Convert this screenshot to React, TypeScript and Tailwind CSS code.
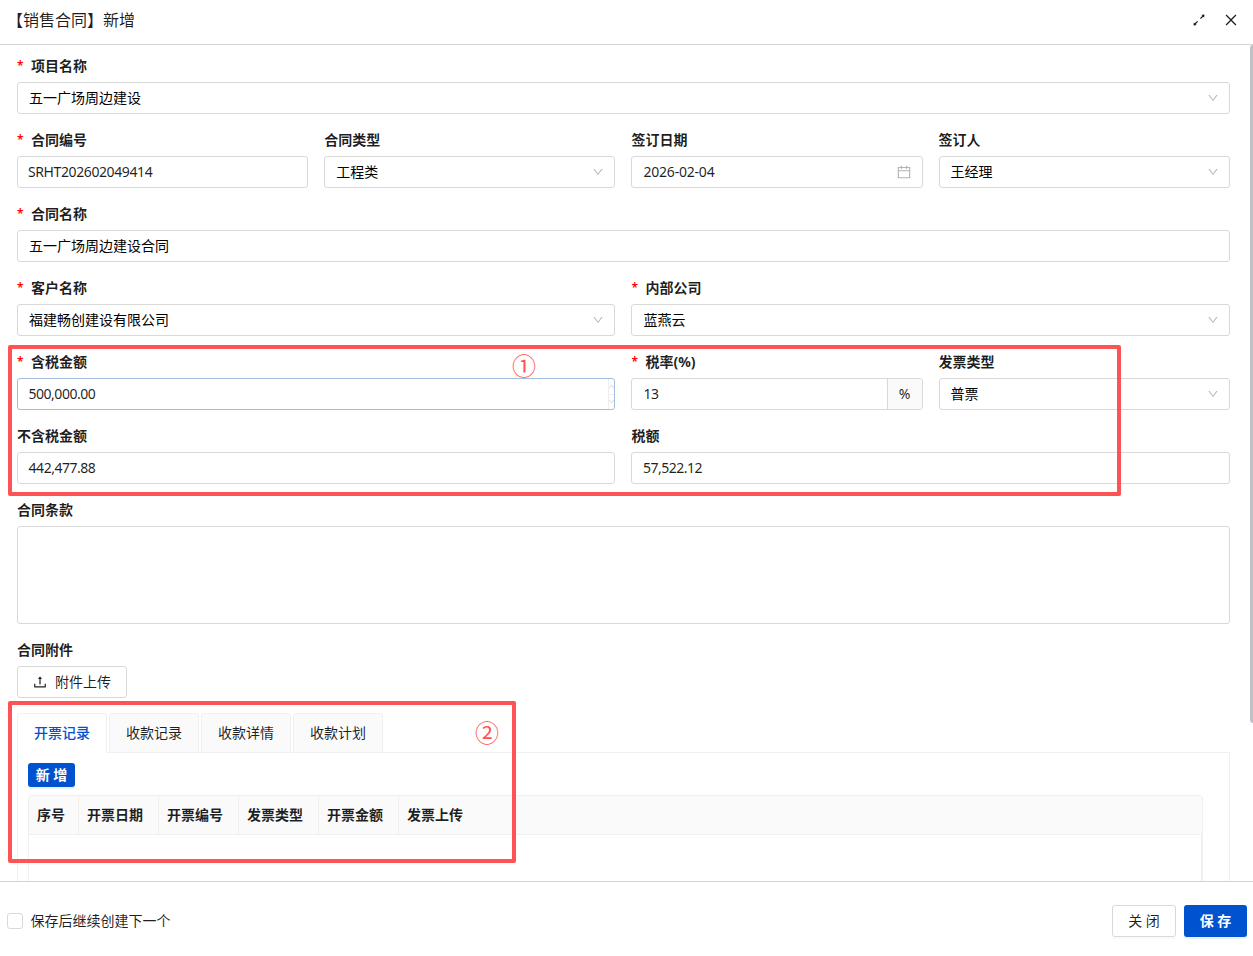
import type { ReactNode } from "react";
import {
  AiOutlineCalendar,
  AiOutlineClose,
  AiOutlineDown,
  AiOutlineUp,
  AiOutlineUpload,
} from "react-icons/ai";

function Label({ text, required }: { text: string; required?: boolean }) {
  return (
    <div className="flex h-8 items-center text-sm font-bold text-black/88">
      {required && <span className="w-[14px] font-['Noto_Sans'] text-[12px] font-semibold leading-none text-[#ff0000]">*</span>}
      <span className="leading-8">{text}</span>
    </div>
  );
}

function Field({ label, required, children, className = "" }: { label: string; required?: boolean; children: ReactNode; className?: string }) {
  return (
    <div className={className}>
      <Label text={label} required={required} />
      {children}
    </div>
  );
}

function Box({ value, icon, variant = "text" }: { value: string; icon?: "down" | "calendar"; variant?: "text" | "code" | "date" | "amount" }) {
  const styles = {
    text: "",
    code: "-ml-px tracking-[-0.4px] text-black/88",
    date: "tracking-[-0.2px] text-black/88",
    amount: "-ml-[0.4px] tracking-[-0.5px] text-black/88",
  };
  return (
    <div className="flex h-8 items-center justify-between rounded-[3px] border border-[#d9d9d9] px-[11px] text-black">
      <span className={styles[variant]}>{value}</span>
      {icon === "down" && <AiOutlineDown size={12} className="-mr-px text-black/30" />}
      {icon === "calendar" && <AiOutlineCalendar size={16} className="-mr-px text-black/30" />}
    </div>
  );
}

function ExpandIcon() {
  return (
    <svg width="16" height="16" viewBox="0 0 16 16" fill="currentColor" stroke="currentColor">
      <path d="M4 12 6.6 9.4M9.4 6.6 12 4" strokeWidth="1.2" fill="none" />
      <path d="M3 10.8 5.2 13 2.8 13.2zM10.8 3 13 5.2 13.2 2.8z" strokeWidth="0.4" strokeLinejoin="round" />
    </svg>
  );
}

const tabs = ["开票记录", "收款记录", "收款详情", "收款计划"];
const columns = ["开票日期", "开票编号", "发票类型", "开票金额"];

export default function App() {
  return (
    <div className="relative flex h-[956px] w-[1253px] flex-col overflow-hidden bg-white font-['Noto_Sans','Noto_Sans_CJK_SC',sans-serif] text-sm text-black/88">
      <header className="flex h-[45px] shrink-0 items-center justify-between border-b border-[#d3d3d3] pr-[14px] pb-1 pl-[7px]">
        <h1 className="text-base leading-6">【销售合同】新增</h1>
        <div className="flex items-center gap-4">
          <ExpandIcon />
          <AiOutlineClose size={16} />
        </div>
      </header>

      <main className="flex min-h-0 flex-1 overflow-hidden">
        <div className="flex min-w-0 flex-1 flex-col gap-2.5 pt-[5px] pr-[20.2px] pl-[17px]">
          <Field label="项目名称" required>
            <Box value="五一广场周边建设" icon="down" />
          </Field>
          <div className="grid grid-cols-4 gap-4">
            <Field label="合同编号" required><Box value="SRHT202602049414" variant="code" /></Field>
            <Field label="合同类型"><Box value="工程类" icon="down" /></Field>
            <Field label="签订日期"><Box value="2026-02-04" icon="calendar" variant="date" /></Field>
            <Field label="签订人"><Box value="王经理" icon="down" /></Field>
          </div>
          <Field label="合同名称" required>
            <Box value="五一广场周边建设合同" />
          </Field>
          <div className="grid grid-cols-2 gap-4">
            <Field label="客户名称" required><Box value="福建畅创建设有限公司" icon="down" /></Field>
            <Field label="内部公司" required><Box value="蓝燕云" icon="down" /></Field>
          </div>
          <div className="grid grid-cols-4 gap-4">
            <Field label="含税金额" required className="col-span-2">
              <div className="flex h-8 items-center justify-between overflow-hidden rounded-[3px] border border-[#a3bcdf] pl-[10.6px]">
                <span className="tracking-[-0.5px]">500,000.00</span>
                <div className="flex h-full w-1.5 flex-col overflow-hidden border-l border-[#eeeeee] text-[#d0d0d0]">
                  <span className="flex flex-1 items-center justify-center border-b border-[#eeeeee]"><AiOutlineUp size={7} className="shrink-0" /></span>
                  <span className="flex flex-1 items-center justify-center"><AiOutlineDown size={7} className="shrink-0" /></span>
                </div>
              </div>
            </Field>
            <Field label="税率(%)" required>
              <div className="flex h-8 items-center overflow-hidden rounded-[3px] border border-[#d9d9d9]">
                <span className="flex-1 pl-[11px] tracking-[-0.43px]">13</span>
                <span className="flex h-full w-[35px] items-center justify-center border-l border-[#d9d9d9] bg-[#fafafa]">%</span>
              </div>
            </Field>
            <Field label="发票类型"><Box value="普票" icon="down" /></Field>
          </div>
          <div className="grid grid-cols-2 gap-4">
            <Field label="不含税金额"><Box value="442,477.88" variant="amount" /></Field>
            <Field label="税额"><Box value="57,522.12" variant="amount" /></Field>
          </div>
          <Field label="合同条款">
            <div className="h-[98px] rounded-[3px] border border-[#d9d9d9]" />
          </Field>
          <Field label="合同附件">
            <button className="flex h-8 w-[110px] items-center justify-center gap-[7px] rounded-[3px] border border-[#d9d9d9]">
              <AiOutlineUpload size={16} className="-ml-px" />
              附件上传
            </button>
          </Field>

          <section className="mt-[5px]">
            <div className="relative z-10 flex gap-0.5">
              {tabs.map((tab, i) => (
                <div
                  key={tab}
                  className={
                    i === 0
                      ? "flex h-10 w-[90px] items-center justify-center rounded-t-[3px] border border-[#f0f0f0] border-b-white bg-white pb-px font-medium text-[#0052d0]"
                      : "flex h-10 w-[90px] items-center justify-center rounded-t-[3px] border border-[#f0f0f0] bg-[#fafafa] pb-px"
                  }
                >
                  {tab}
                </div>
              ))}
            </div>
            <div className="-mt-px h-[200px] w-full border border-[#f0f0f0] pt-2.5 pl-2.5">
              <button className="flex h-6 w-[47px] items-center justify-center rounded-[3px] bg-[#0052cf] font-bold text-white shadow-[0_2px_0_#e4f3ff]">新 增</button>
              <div className="mt-2 w-[1175px] rounded-t-[3px] border border-[#f0f0f0]">
                <div className="flex h-[39px] items-center border-b border-[#f0f0f0] bg-[#fafafa] font-bold">
                  <span className="flex h-full w-[50px] items-center border-r border-[#f0f0f0] pl-2">序号</span>
                  {columns.map((c) => (
                    <span key={c} className="flex h-full w-20 items-center border-r border-[#f0f0f0] pl-2">{c}</span>
                  ))}
                  <span className="pl-2">发票上传</span>
                </div>
                <div className="h-[120px] border-r border-[#f0f0f0]" />
              </div>
            </div>
          </section>
        </div>
        <div className="h-[678px] w-[3px] shrink-0 rounded-l-[3px] bg-[#c1c1c8]" />
      </main>

      <footer className="flex h-[75px] shrink-0 items-center justify-between border-t border-[#d3d3d3] bg-white pt-1 pr-1.5 pl-[7px]">
        <label className="flex items-center gap-2">
          <span className="h-4 w-4 rounded-[3px] border border-[#d9d9d9]" />
          <span className="-ml-[0.5px]">保存后继续创建下一个</span>
        </label>
        <div className="flex gap-2">
          <button className="h-8 w-16 rounded-[3px] border border-[#d9d9d9] shadow-[0_2px_0_#fafafa]">关 闭</button>
          <button className="h-8 w-[63px] rounded-[3px] bg-[#0052cf] font-bold text-white shadow-[0_2px_0_#e4f3ff]">保 存</button>
        </div>
      </footer>

      <div className="absolute top-[345px] left-2 z-20 h-[151px] w-[1113px] rounded-[2px] border-4 border-[#ff5252]" />
      <span className="absolute top-[351px] left-[511px] z-20 w-[26px] text-center font-['Noto_Sans_CJK_SC',sans-serif] text-[24px] leading-7 text-[#ff5252]">①</span>
      <div className="absolute top-[701px] left-2 z-20 h-[162px] w-[508px] rounded-[2px] border-4 border-[#ff5252]" />
      <span className="absolute top-[718px] left-[474px] z-20 w-[26px] text-center font-['Noto_Sans_CJK_SC',sans-serif] text-[24px] leading-7 text-[#ff5252]">②</span>
    </div>
  );
}
